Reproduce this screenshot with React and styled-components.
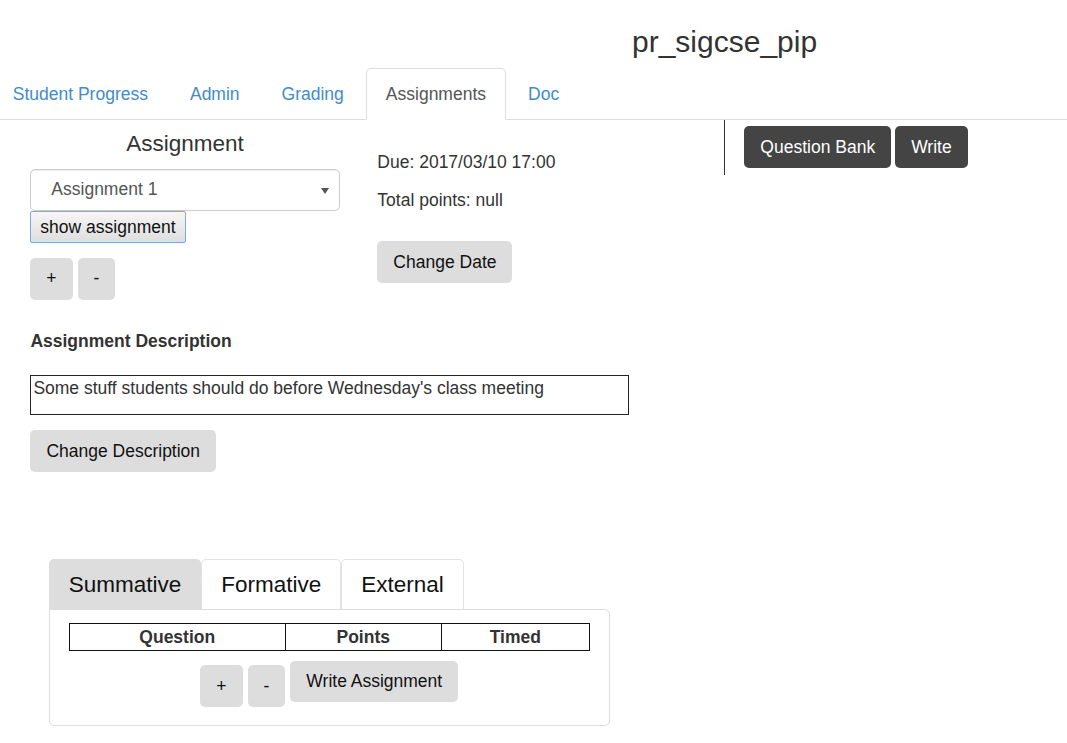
import React from "react";
import styled, { createGlobalStyle } from "styled-components";

const GlobalStyle = createGlobalStyle`
  body {
    margin: 0;
    overflow-x: hidden;
    font-family: "Liberation Sans", Arial, sans-serif;
    font-size: 17.5px;
    line-height: 25px;
    color: #333;
    background: #fff;
  }
`;

const App = () => {
  return (
    <>
      <GlobalStyle />
      <Page>
        <Title>pr_sigcse_pip</Title>

        <NavTabs>
          <NavTab>Student Progress</NavTab>
          <NavTab>Admin</NavTab>
          <NavTab>Grading</NavTab>
          <NavTab $active>Assignments</NavTab>
          <NavTab>Doc</NavTab>
        </NavTabs>

        <Row>
          <Col>
            <ColHeading>Assignment</ColHeading>
            <SelectBox>
              Assignment 1
              <Caret />
            </SelectBox>
            <ShowButton>show assignment</ShowButton>
            <ButtonRow>
              <Btn>+</Btn>
              <Btn>-</Btn>
            </ButtonRow>
          </Col>

          <Col $top={30}>
            <Para>Due: 2017/03/10 17:00</Para>
            <Para>Total points: null</Para>
            <Btn $mt={16}>Change Date</Btn>
          </Col>

          <Col>
            <Divider>
              <Btn $dark>Question Bank</Btn>
              <Btn $dark>Write</Btn>
            </Divider>
          </Col>
        </Row>

        <Description>
          <Label>Assignment Description</Label>
          <DescBox>Some stuff students should do before Wednesday's class meeting</DescBox>
          <Btn>Change Description</Btn>
        </Description>

        <Bottom>
          <BigTabs>
            <BigTab $active>Summative</BigTab>
            <BigTab>Formative</BigTab>
            <BigTab>External</BigTab>
          </BigTabs>
          <Panel>
            <Table>
              <thead>
                <tr>
                  <Th $w={215}>Question</Th>
                  <Th $w={155}>Points</Th>
                  <Th>Timed</Th>
                </tr>
              </thead>
            </Table>
            <PanelButtons>
              <Btn $mt={4}>+</Btn>
              <Btn $mt={4}>-</Btn>
              <Btn $tight>Write Assignment</Btn>
            </PanelButtons>
          </Panel>
        </Bottom>
      </Page>
    </>
  );
};

export default App;

const Page = styled.div`
  width: 1067px;
  padding-bottom: 40px;
`;

const Title = styled.h3`
  margin: 25px 0 10px;
  padding-left: 632px;
  font-size: 30px;
  font-weight: 500;
  line-height: 33px;
  color: #333;
`;

const NavTabs = styled.div`
  display: flex;
  margin-left: -7px;
  width: 1074px;
  border-bottom: 1px solid #ddd;
`;

const NavTab = styled.div`
  padding: 12.5px 18.75px;
  margin-right: 2.5px;
  margin-bottom: -1px;
  border: 1px solid transparent;
  border-radius: 5px 5px 0 0;
  color: ${(p) => (p.$active ? "#555" : "#428bca")};
  background: ${(p) => (p.$active ? "#fff" : "transparent")};
  ${(p) => p.$active && "border-color: #ddd #ddd transparent;"}
`;

const Row = styled.div`
  display: grid;
  grid-template-columns: repeat(3, 347px);
  margin-left: 11.6px;
`;

const Col = styled.div`
  padding: ${(p) => p.$top || 0}px 18.75px 0;
  display: flex;
  flex-direction: column;
  align-items: flex-start;
`;

const ColHeading = styled.h4`
  align-self: stretch;
  margin: 11.5px 0 12.5px;
  text-align: center;
  font-size: 22.5px;
  font-weight: 500;
  line-height: 24.75px;
`;

const SelectBox = styled.div`
  position: relative;
  align-self: stretch;
  box-sizing: border-box;
  height: 42px;
  padding: 7.5px 20px;
  border: 1px solid #ccc;
  border-radius: 5px;
  color: #555;
  box-shadow: inset 0 1px 1px rgba(0, 0, 0, 0.075);
`;

const Caret = styled.span`
  position: absolute;
  right: 10px;
  top: 18px;
  width: 0;
  height: 0;
  border-left: 4px solid transparent;
  border-right: 4px solid transparent;
  border-top: 6px solid #555;
`;

const ShowButton = styled.button`
  font-family: inherit;
  font-size: 17.5px;
  line-height: 22px;
  height: 32px;
  padding: 0 9px;
  color: #111;
  background: linear-gradient(#f6f6f6, #dedede);
  border: 1px solid #7eaae3;
  border-radius: 2px;
`;

const ButtonRow = styled.div`
  display: flex;
  gap: 5px;
  margin-top: 15px;
`;

const Btn = styled.button`
  font-family: inherit;
  font-size: 17.5px;
  line-height: 25px;
  padding: ${(p) => (p.$tight ? "8px 16px" : "8.5px 16px")};
  margin-top: ${(p) => p.$mt || 0}px;
  border: none;
  border-radius: 5px;
  background: ${(p) => (p.$dark ? "#444" : "#ddd")};
  color: ${(p) => (p.$dark ? "#fff" : "#111")};
  white-space: nowrap;
`;

const Para = styled.p`
  margin: 0 0 12.5px;
`;

const Divider = styled.div`
  display: flex;
  gap: 4px;
  height: 55px;
  box-sizing: border-box;
  padding: 6px 0 0 19px;
  border-left: 1px solid #333;
  align-items: flex-start;
`;

const Description = styled.div`
  padding: 29px 0 0 30.4px;
  display: flex;
  flex-direction: column;
  align-items: flex-start;
`;

const Label = styled.div`
  font-weight: bold;
  margin-bottom: 21.5px;
`;

const DescBox = styled.div`
  box-sizing: border-box;
  width: 599px;
  height: 40px;
  padding: 0 2px;
  border: 1px solid #222;
  margin-bottom: 15px;
`;

const Bottom = styled.div`
  margin: 87px 0 0 48.75px;
  width: 561px;
`;

const BigTabs = styled.div`
  display: flex;
`;

const BigTab = styled.div`
  font-size: 22.5px;
  line-height: 25px;
  padding: 12px 19px;
  border: 1px solid ${(p) => (p.$active ? "#ddd" : "#e3e3e3")};
  border-bottom: none;
  border-radius: 5px 5px 0 0;
  color: #111;
  background: ${(p) => (p.$active ? "#ddd" : "#fff")};
`;

const Panel = styled.div`
  border: 1px solid #ddd;
  border-radius: 0 5px 5px 5px;
  padding: 13px 19px 18px;
`;

const Table = styled.table`
  width: 100%;
  border-collapse: collapse;
`;

const Th = styled.th`
  ${(p) => p.$w && `width: ${p.$w}px;`}
  border: 1px solid #111;
  padding: 1px 0 0;
  font-weight: bold;
  text-align: center;
`;

const PanelButtons = styled.div`
  display: flex;
  justify-content: center;
  align-items: flex-start;
  gap: 5px;
  margin-top: 10px;
`;
